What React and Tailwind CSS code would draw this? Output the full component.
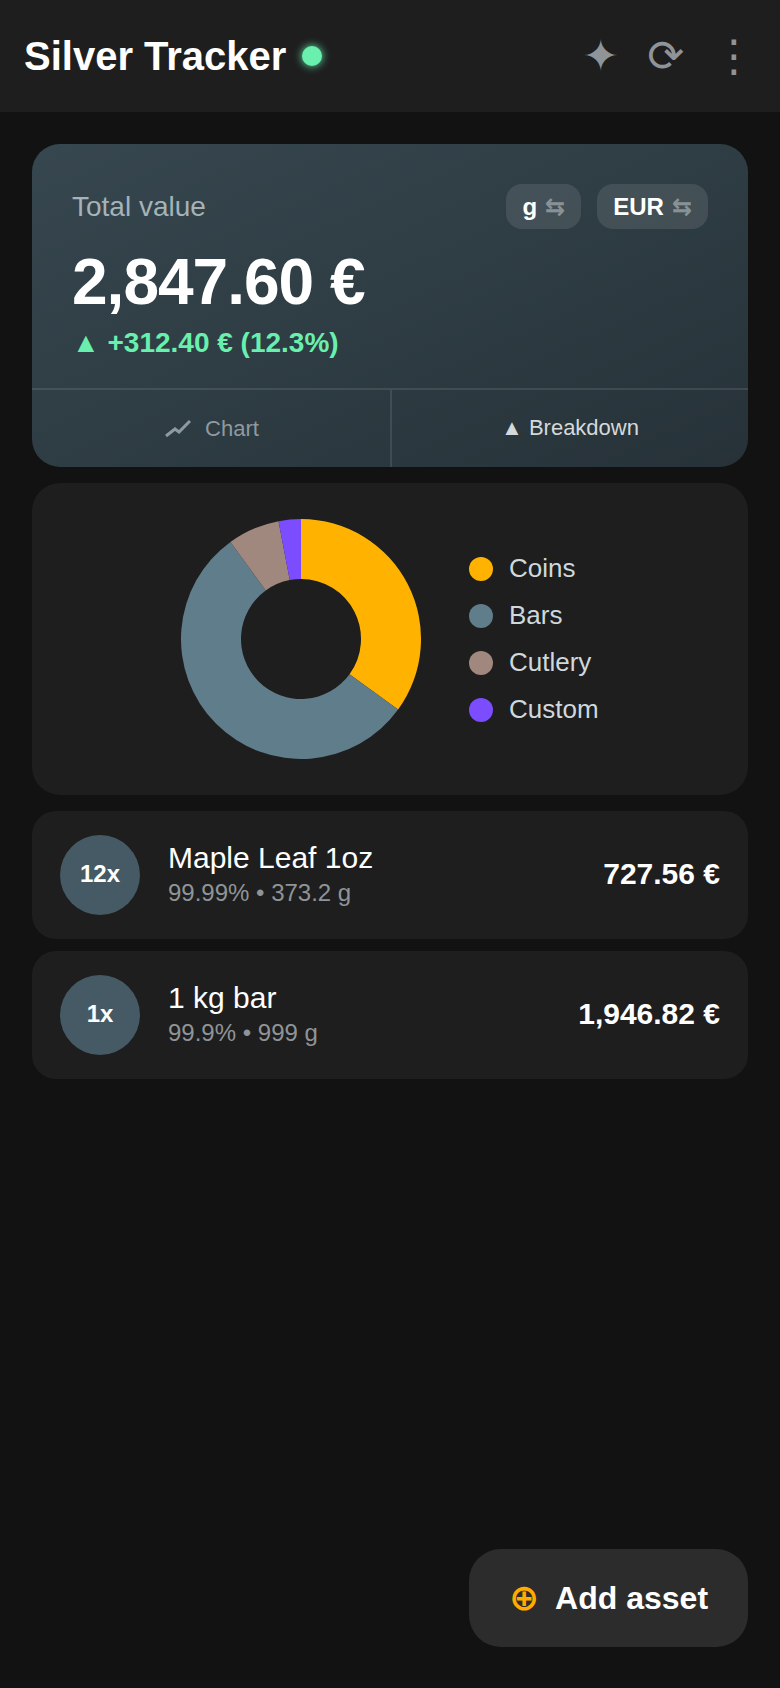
const font = { fontFamily: '"Liberation Sans", "DejaVu Sans", sans-serif' };

const slices = [
  { name: "Coins", pct: 35, color: "#ffb300", dot: "bg-[#ffb300]" },
  { name: "Bars", pct: 55, color: "#607d8b", dot: "bg-[#607d8b]" },
  { name: "Cutlery", pct: 7, color: "#a1887f", dot: "bg-[#a1887f]" },
  { name: "Custom", pct: 3, color: "#7c4dff", dot: "bg-[#7c4dff]" },
];

const assets = [
  { qty: "12x", name: "Maple Leaf 1oz", sub: "99.99% • 373.2 g", value: "727.56 €" },
  { qty: "1x", name: "1 kg bar", sub: "99.9% • 999 g", value: "1,946.82 €" },
];

function Donut() {
  let start = 0;
  const point = (angle, r) => {
    const rad = ((angle - 90) * Math.PI) / 180;
    return `${120 + r * Math.cos(rad)} ${120 + r * Math.sin(rad)}`;
  };
  return (
    <svg width="240" height="240" viewBox="0 0 240 240" className="shrink-0">
      {slices.map((s) => {
        const a0 = start;
        const a1 = start + (s.pct / 100) * 360;
        start = a1;
        const large = a1 - a0 > 180 ? 1 : 0;
        const d = `M ${point(a0, 120)} A 120 120 0 ${large} 1 ${point(a1, 120)} L ${point(a1, 60)} A 60 60 0 ${large} 0 ${point(a0, 60)} Z`;
        return <path key={s.name} d={d} fill={s.color} />;
      })}
    </svg>
  );
}

function Pill({ label }) {
  return (
    <div className="flex h-[45px] items-center gap-2 rounded-2xl bg-white/10 px-4 text-[24px] font-bold text-white">
      <span>{label}</span>
      <span className="text-white/40">⇆</span>
    </div>
  );
}

function ChartIcon() {
  return (
    <svg width="26" height="18" viewBox="0 0 26 18" fill="none" stroke="currentColor" strokeWidth="3">
      <path d="M1 16 L10 9 L14 12 L25 1" />
    </svg>
  );
}

export default function App() {
  return (
    <div style={font} className="relative h-[1688px] w-[780px] overflow-hidden bg-[#121212]">
      <header className="flex h-[112px] items-center justify-between bg-[#1e1e1e] pl-6 pr-6">
        <div className="flex items-center gap-4">
          <h1 className="text-[40px] font-bold text-white">Silver Tracker</h1>
          <span className="size-5 rounded-full bg-[#69f0ae] shadow-[0_0_8px_#69f0ae]"></span>
        </div>
        <div className="flex items-center gap-7 text-[44px] leading-none text-[#8f9498]">
          <span>✦</span>
          <span>⟳</span>
          <span>⋮</span>
        </div>
      </header>

      <main className="flex flex-col px-8 pt-8">
        <section className="overflow-hidden rounded-[28px] bg-gradient-to-br from-[#37474f] to-[#263238]">
          <div className="h-[244px] px-10 pt-10">
            <div className="flex items-center justify-between">
              <span className="text-[28px] text-[#a4b2b9]">Total value</span>
              <div className="flex gap-4">
                <Pill label="g" />
                <Pill label="EUR" />
              </div>
            </div>
            <div className="mt-[13px] text-[64px] leading-[80px] font-bold tracking-[-1px] text-white">2,847.60 €</div>
            <div className="mt-[3px] text-[28px] leading-9 font-bold text-[#69f0ae]">▲ +312.40 € (12.3%)</div>
          </div>
          <div className="grid h-[79px] grid-cols-2 border-t-2 border-white/10 text-[22px]">
            <div className="flex items-center justify-center gap-[14px] pl-[2px] text-[#8f9a9f]">
              <ChartIcon />
              <span>Chart</span>
            </div>
            <div className="flex items-center justify-center border-l-2 border-white/10 pb-[2px] text-[#d6d9da]">
              ▲ Breakdown
            </div>
          </div>
        </section>

        <section className="mt-4 flex h-[312px] items-center gap-12 rounded-[28px] bg-[#1e1e1e] pl-[149px]">
          <Donut />
          <div className="flex flex-col gap-[15px]">
            {slices.map((s) => (
              <div key={s.name} className="flex h-8 items-center gap-4 text-[26px] text-[#cfd8dc]">
                <span className={`size-6 rounded-full ${s.dot}`}></span>
                <span>{s.name}</span>
              </div>
            ))}
          </div>
        </section>

        <div className="mt-4 flex flex-col gap-3">
          {assets.map((a) => (
            <div key={a.name} className="flex h-[128px] items-center rounded-3xl bg-[#1e1e1e] px-7">
              <div className="flex size-20 items-center justify-center rounded-full bg-[#455a64] pb-[2px] text-[24px] font-bold text-white">{a.qty}</div>
              <div className="ml-7 flex-1">
                <div className="text-[30px] leading-9 text-white">{a.name}</div>
                <div className="text-[24px] leading-[34px] text-[#8f9498]">{a.sub}</div>
              </div>
              <div className="pb-[3px] text-[30px] font-bold text-white">{a.value}</div>
            </div>
          ))}
        </div>
      </main>

      <button className="absolute top-[1549px] left-[469px] flex h-[98px] w-[279px] items-center justify-center gap-4 rounded-[32px] bg-[#2c2c2c] text-[32px] font-bold text-white">
        <span className="text-[36px] text-[#ffab00]">⊕</span>
        <span>Add asset</span>
      </button>
    </div>
  );
}
